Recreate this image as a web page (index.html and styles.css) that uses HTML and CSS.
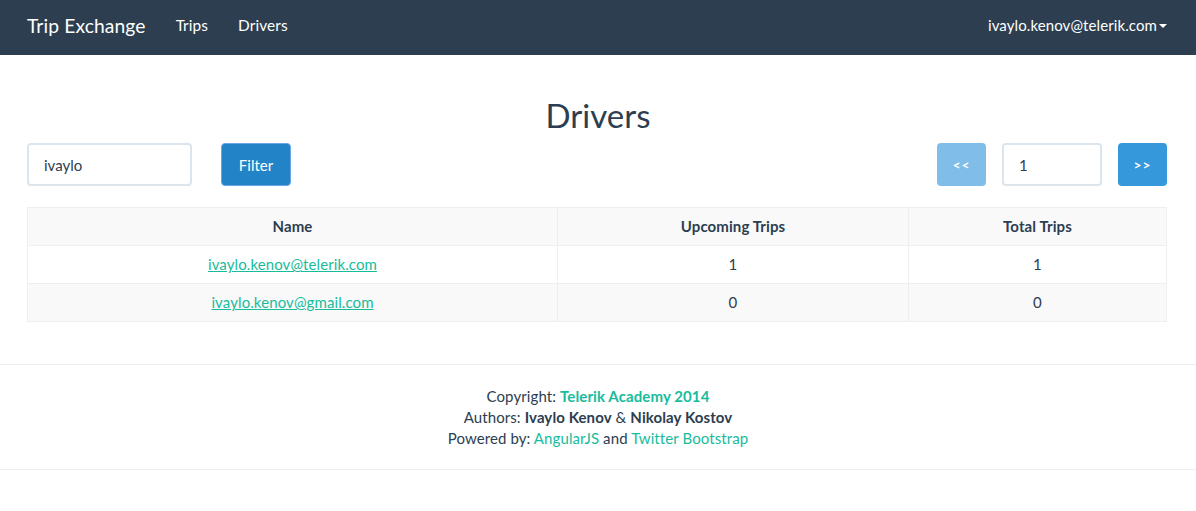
FILE: index.html
```html
<!DOCTYPE html>
<html>
<head>
<meta charset="utf-8">
<title>Trip Exchange - Drivers</title>
<link rel="stylesheet" href="styles.css">
</head>
<body>
<nav class="navbar">
  <div class="nav-inner">
    <div class="nav-left">
      <a class="brand" href="#">Trip Exchange</a>
      <a class="nav-link" href="#">Trips</a>
      <a class="nav-link" href="#">Drivers</a>
    </div>
    <a class="nav-user" href="#">ivaylo.kenov@telerik.com<span class="caret"></span></a>
  </div>
</nav>
<main class="container">
  <h1 class="title">Drivers</h1>
  <div class="controls">
    <div class="filter">
      <input class="field field-search" type="text" value="ivaylo">
      <button class="btn btn-filter">Filter</button>
    </div>
    <div class="pager">
      <button class="btn btn-page btn-disabled">&lt;&lt;</button>
      <input class="field field-page" type="text" value="1">
      <button class="btn btn-page">&gt;&gt;</button>
    </div>
  </div>
  <table class="table">
    <colgroup>
      <col class="c1"><col class="c2"><col class="c3">
    </colgroup>
    <tr class="striped">
      <th>Name</th><th>Upcoming Trips</th><th>Total Trips</th>
    </tr>
    <tr>
      <td><a href="#">ivaylo.kenov@telerik.com</a></td><td>1</td><td>1</td>
    </tr>
    <tr class="striped">
      <td><a href="#">ivaylo.kenov@gmail.com</a></td><td>0</td><td>0</td>
    </tr>
  </table>
</main>
<footer class="footer">
  <div>Copyright: <a class="strong-link" href="#">Telerik Academy 2014</a></div>
  <div>Authors: <b>Ivaylo Kenov</b> &amp; <b>Nikolay Kostov</b></div>
  <div>Powered by: <a href="#">AngularJS</a> and <a href="#">Twitter Bootstrap</a></div>
</footer>
</body>
</html>
```
FILE: styles.css
```css
* { box-sizing: border-box; }
html, body { margin: 0; padding: 0; background: #fff; }
body {
  font-family: Lato, "Open Sans", "Liberation Sans", sans-serif;
  font-size: 15px;
  line-height: 21px;
  letter-spacing: 0.1px;
  color: #2c3e50;
}
a { color: #18bc9c; text-decoration: none; }

.navbar { background: #2c3e50; height: 55px; }
.nav-inner {
  width: 1170px; margin: 0 auto; padding: 0 14px;
  height: 55px; display: flex; align-items: center; justify-content: space-between;
}
.nav-left { display: flex; align-items: center; }
.brand { color: #fff; font-size: 19.3px; margin-right: 30px; padding-bottom: 4px; }
.nav-link { color: #fff; font-size: 15.4px; margin-right: 30px; padding-bottom: 4px; }
.nav-user { color: #fff; font-size: 15px; display: flex; align-items: center; padding-bottom: 4px; margin-right: 2px; }
.caret {
  display: inline-block; width: 0; height: 0; margin-left: 2px;
  border-left: 4px solid transparent; border-right: 4px solid transparent;
  border-top: 4px solid #fff;
}

.container { width: 1170px; margin: 0 auto; padding: 0 14px; }
.title {
  margin: 40px 0 8px; text-align: center; font-weight: 400;
  font-size: 33px; line-height: 40px; color: #2c3e50; letter-spacing: 0;
}
.controls { display: flex; justify-content: space-between; align-items: flex-start; }
.filter { display: flex; gap: 29px; }
.pager { display: flex; gap: 16px; margin-right: 2px; }
.field {
  height: 43px; border: 2px solid #dce4ec; border-radius: 4px;
  font-family: inherit; font-size: 15px; color: #2c3e50;
  padding: 0 15px; outline: none; background: #fff;
}
.field-search { width: 165px; }
.field-page { width: 100px; }
.btn {
  height: 43px; border-radius: 4px; border: none; color: #fff;
  font-family: inherit; font-size: 15px;
}
.btn-filter {
  width: 70px; background: #2383c7; border: 1px solid #6aa6e6;
}
.btn-page { width: 49px; background: #3498db; font-size: 14px; font-weight: 700; letter-spacing: 1px; }
.btn-disabled { background: #80bde8; }

.table {
  width: 1140px; margin: 21px 0 0; border-collapse: collapse;
  border: 1px solid #ecf0f1;
}
.c1 { width: 530px; }
.c2 { width: 351px; }
.table th, .table td {
  border: 1px solid #ecf0f1; text-align: center; height: 38px; padding: 0 8px;
}
.table th { font-weight: 700; }
.table td a { text-decoration: underline; }
.striped { background: #f9f9f9; }

.footer {
  margin-top: 42px; border-top: 1px solid #ecf0f1; border-bottom: 1px solid #ecf0f1;
  padding: 21px 0 20px; text-align: center;
}
.footer b { font-weight: 700; }
.strong-link { font-weight: 700; }
```
